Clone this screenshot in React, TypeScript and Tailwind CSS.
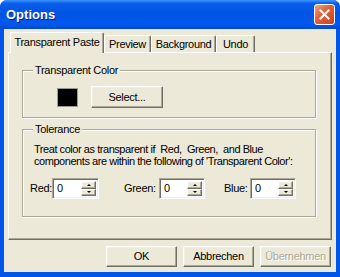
import React from 'react';

const raised =
  'border border-t-white border-l-white border-r-[#716F64] border-b-[#716F64] shadow-[inset_-1px_-1px_0_#ACA899,inset_1px_1px_0_#F1EFE2] bg-[#ECE9D8]';
const sunken =
  'border border-t-[#ACA899] border-l-[#ACA899] border-r-white border-b-white shadow-[inset_1px_1px_0_#716F64,inset_-1px_-1px_0_#F1EFE2] bg-white';
const etched =
  'border border-[#ACA899] shadow-[1px_1px_0_white,inset_1px_1px_0_white]';

function Tab({ label, active, width }: { label: string; active?: boolean; width: string }) {
  return (
    <div
      className={`${width} flex items-center justify-center border-t border-l border-r border-t-white border-l-white border-r-[#716F64] rounded-t-[2px] shadow-[inset_-1px_0_0_#ACA899] bg-[#ECE9D8] ${
        active ? 'h-[21px] -mb-px relative z-10 pb-[2px]' : 'h-[17px] pt-px'
      }`}
    >
      {label}
    </div>
  );
}

function Spinner() {
  return (
    <div className={`${sunken} h-[21px] flex items-stretch p-[2px]`}>
      <div className="flex-1 pl-[2px] leading-[15px]">0</div>
      <div className="w-[15px] flex flex-col">
        <div className={`${raised} flex-1 flex items-center justify-center`}>
          <div className="w-0 h-0 border-l-[2px] border-r-[2px] border-b-[2px] border-l-transparent border-r-transparent border-b-black" />
        </div>
        <div className={`${raised} flex-1 flex items-center justify-center`}>
          <div className="w-0 h-0 border-l-[2px] border-r-[2px] border-t-[2px] border-l-transparent border-r-transparent border-t-black" />
        </div>
      </div>
    </div>
  );
}

function Button({ label, disabled }: { label: string; disabled?: boolean }) {
  return (
    <div
      className={`${raised} w-[71px] h-[21px] flex items-center justify-center ${
        disabled ? 'text-[#ACA899] [text-shadow:1px_1px_0_white]' : ''
      }`}
    >
      {label}
    </div>
  );
}

export default function App() {
  return (
    <div className="w-[340px] h-[277px] flex flex-col bg-[#0055EA] rounded-t-[7px] overflow-hidden font-['Liberation_Sans',Arial,sans-serif] text-[11px] tracking-[-0.3px] text-black">
      {/* Title bar */}
      <div className="h-[29px] flex items-center justify-between pl-[6px] pr-[5px] bg-[linear-gradient(180deg,#3D95FF_0%,#0A5DEA_12%,#0054E3_45%,#0058EE_85%,#0047D2_100%)]">
        <span className="text-white font-bold text-[13px] tracking-normal [text-shadow:1px_1px_0_#0A1E8C]">Options</span>
        <div className="w-[21px] h-[21px] rounded-[3px] border border-white bg-[linear-gradient(135deg,#F0A48A_0%,#E2643F_40%,#C8401E_100%)] flex items-center justify-center">
          <svg width="11" height="11" viewBox="0 0 11 11">
            <path d="M1.5 1.5 L9.5 9.5 M9.5 1.5 L1.5 9.5" stroke="white" strokeWidth="2" strokeLinecap="square" />
          </svg>
        </div>
      </div>

      {/* Client area */}
      <div className="flex-1 mx-[4px] mb-[5px] bg-[#ECE9D8] pt-[4px] px-[4px] flex flex-col">
        <div className="h-[19px] flex items-end pl-[2px]">
          <Tab label="Transparent Paste" active width="w-[94px]" />
          <Tab label="Preview" width="w-[47px]" />
          <Tab label="Background" width="w-[65px]" />
          <Tab label="Undo" width="w-[39px]" />
        </div>

        <div className="h-[188px] border border-t-white border-l-white border-r-[#716F64] border-b-[#716F64] shadow-[inset_-1px_-1px_0_#ACA899] flex flex-col pl-[13px]">
          <fieldset className={`${etched} w-[294px] h-[54px] mt-[11px]`}>
            <legend className="ml-[10px] px-[2px] leading-[12px] bg-[#ECE9D8]">Transparent Color</legend>
            <div className="flex items-center h-[22px] mt-[10px]">
              <div className="ml-[34px] w-[21px] h-[19px] bg-black border border-[#9D9B8F]" />
              <div className={`${raised} ml-[13px] w-[72px] h-[22px] flex items-center justify-center`}>Select...</div>
            </div>
          </fieldset>

          <fieldset className={`${etched} w-[294px] h-[94px] mt-[5px]`}>
            <legend className="ml-[10px] px-[2px] leading-[12px] bg-[#ECE9D8]">Tolerance</legend>
            <p className="ml-[11px] mt-[8px] leading-[12px] whitespace-pre tracking-[-0.45px]">
              {"Treat color as transparent if  Red,  Green,  and Blue\ncomponents are within the following of 'Transparent Color':"}
            </p>
            <div className="flex items-center mt-[11px]">
              <span className="ml-[7px] w-[22px]">Red:</span>
              <div className="w-[47px]">
                <Spinner />
              </div>
              <span className="ml-[25px] w-[35px]">Green:</span>
              <div className="w-[46px]">
                <Spinner />
              </div>
              <span className="ml-[19px] w-[26px]">Blue:</span>
              <div className="w-[46px]">
                <Spinner />
              </div>
            </div>
          </fieldset>
        </div>

        <div className="flex justify-end gap-[6px] mt-[6px] mr-[1px]">
          <Button label="OK" />
          <Button label="Abbrechen" />
          <Button label="Übernehmen" disabled />
        </div>
      </div>
    </div>
  );
}
